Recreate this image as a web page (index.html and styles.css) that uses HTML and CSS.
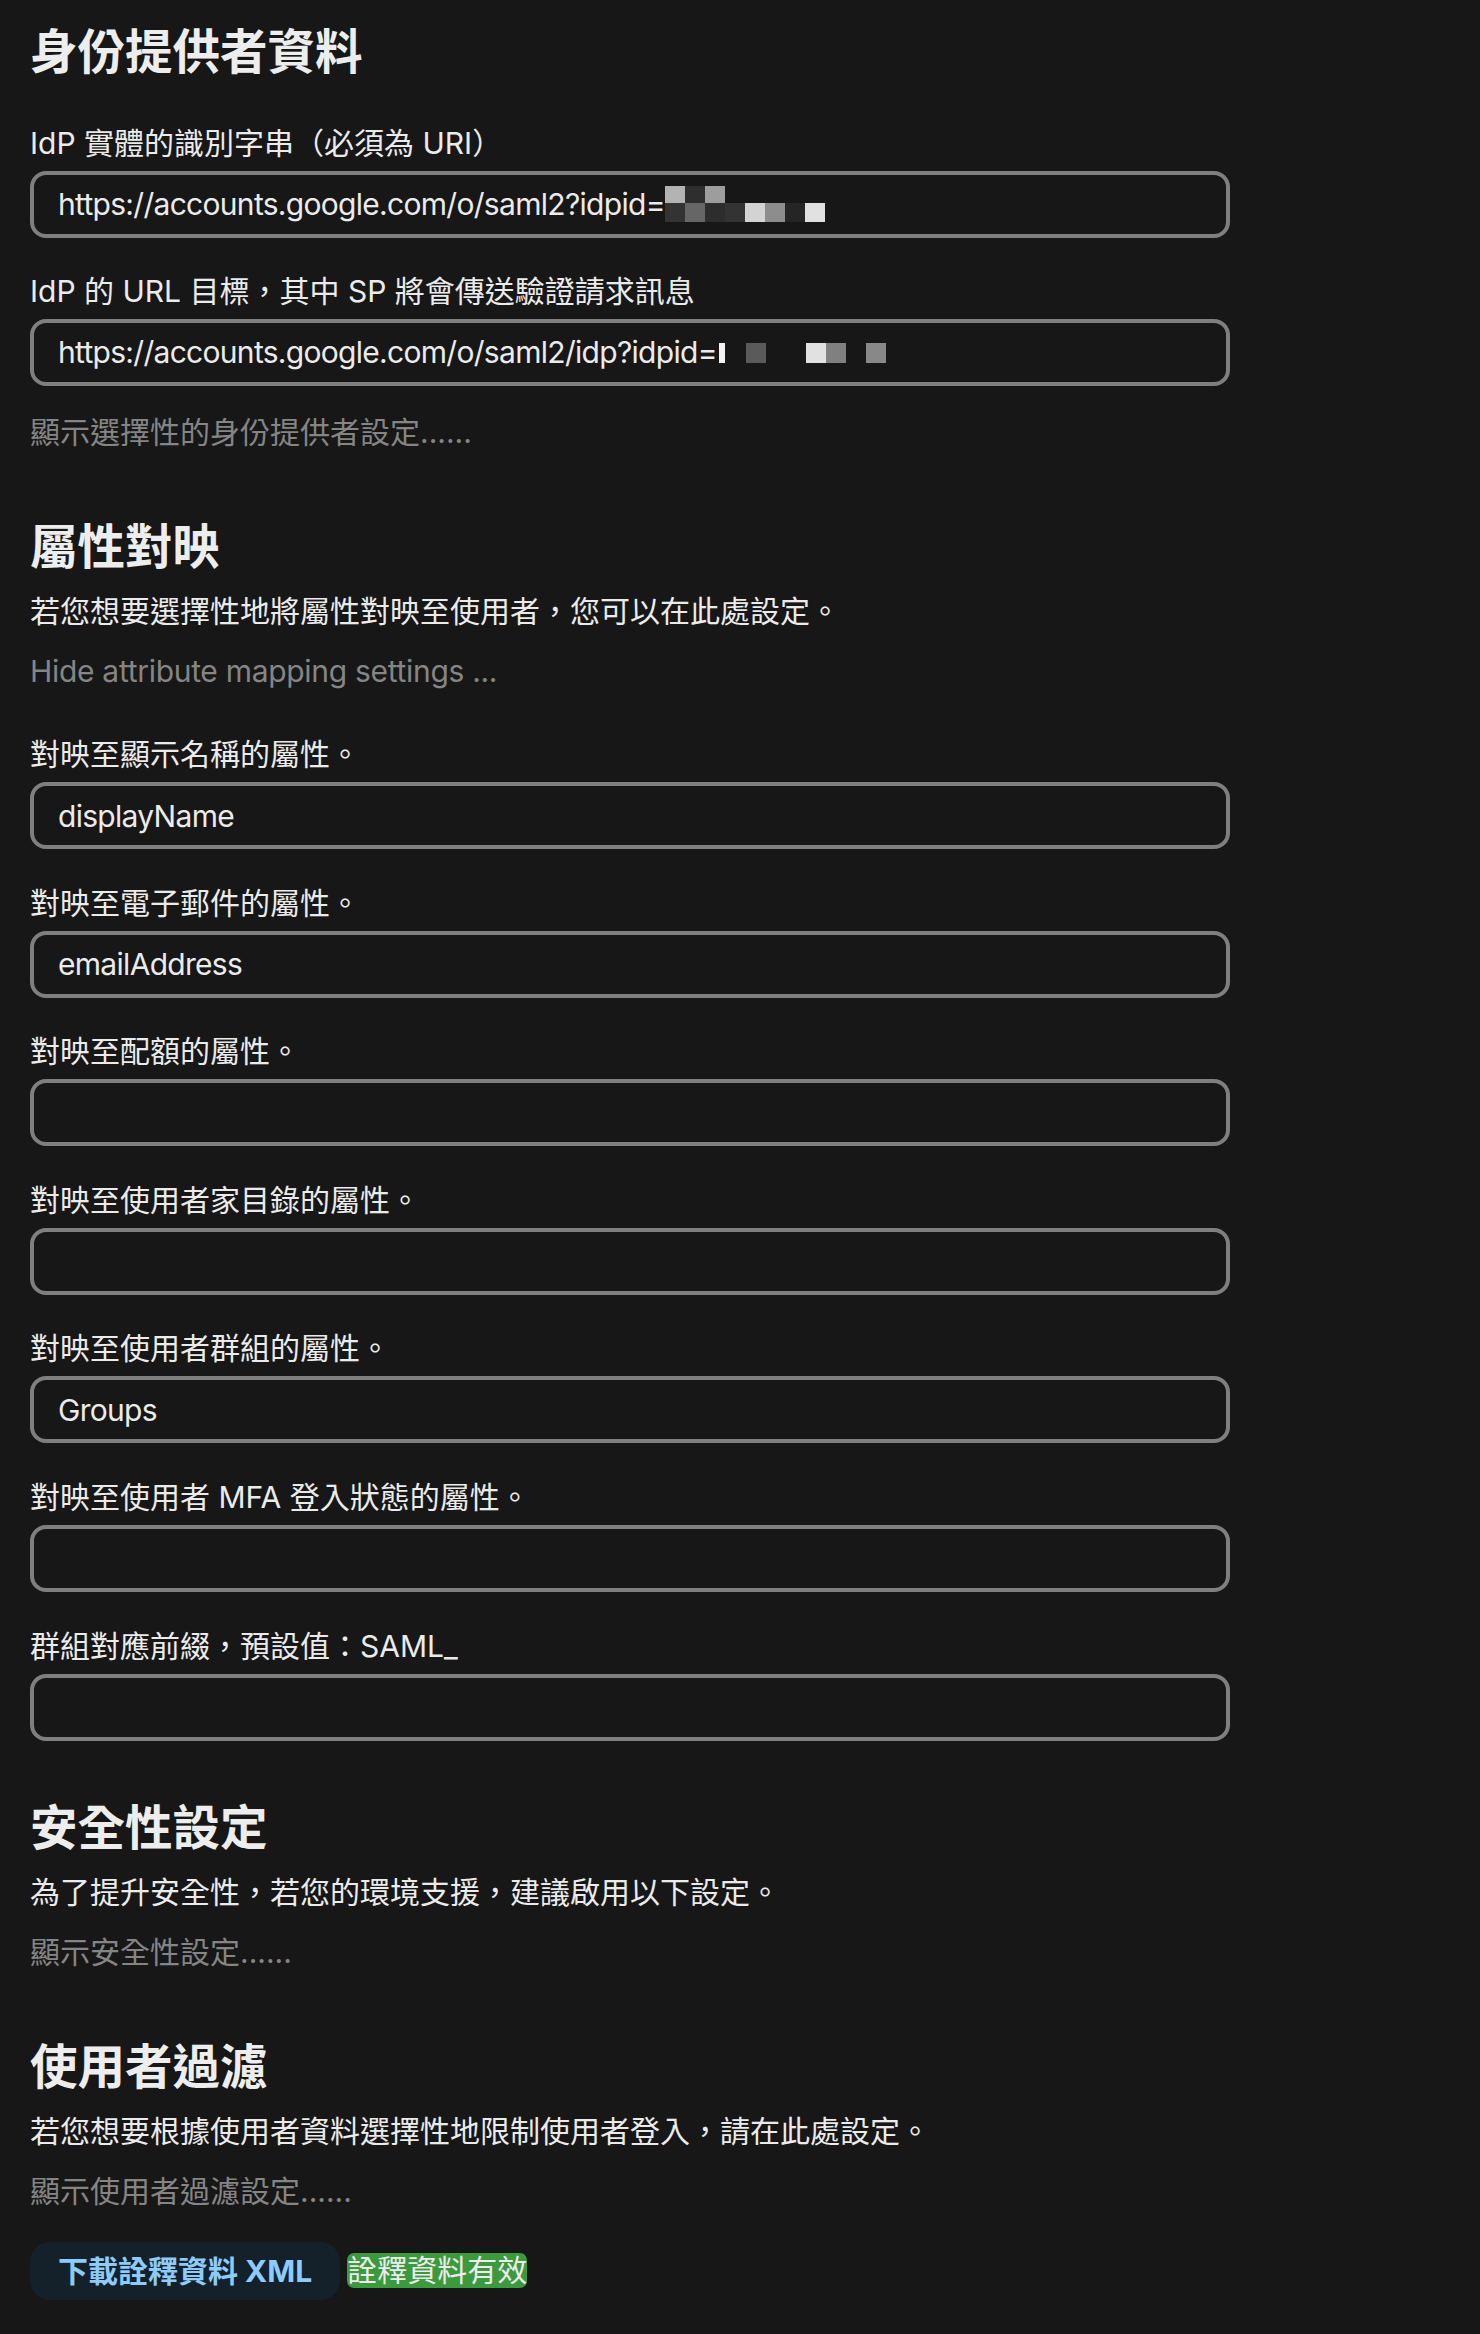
FILE: index.html
```html
<!DOCTYPE html>
<html lang="zh-Hant">
<head>
<meta charset="utf-8">
<title>SAML 設定</title>
<link rel="stylesheet" href="styles.css">
</head>
<body>
<main class="page">

  <section class="sec sec-first">
    <h2 class="sec-title">身份提供者資料</h2>
    <div class="field field-first">
      <label class="field-label">IdP 實體的識別字串（必須為 URI）</label>
      <div class="input input-masked"><span class="val">https://accounts.google.com/o/saml2?idpid=</span><span class="mosaic mosaic-a"><span class="grid-a"><i class="m b3"></i><i class="m m2e"></i><i class="m m9d"></i><i class="m"></i><i class="m"></i><i class="m"></i><i class="m"></i><i class="m"></i><i class="m m33"></i><i class="m m66"></i><i class="m m2d"></i><i class="m m33"></i><i class="m md3"></i><i class="m m8d"></i><i class="m m25"></i><i class="m me1"></i></span></span></div>
    </div>
    <div class="field">
      <label class="field-label">IdP 的 URL 目標，其中 SP 將會傳送驗證請求訊息</label>
      <div class="input input-masked"><span class="val">https://accounts.google.com/o/saml2/idp?idpid=</span><span class="mosaic mosaic-b"><span class="row-b"><i class="bar"></i><i class="n sp20"></i><i class="n m5a"></i><i class="n sp40"></i><i class="n me1"></i><i class="n m80"></i><i class="n sp20"></i><i class="n m88"></i></span></span></div>
    </div>
    <a class="toggle toggle-after-field">顯示選擇性的身份提供者設定......</a>
  </section>

  <section class="sec">
    <h2 class="sec-title">屬性對映</h2>
    <p class="desc">若您想要選擇性地將屬性對映至使用者，您可以在此處設定。</p>
    <a class="toggle toggle-en">Hide attribute mapping settings ...</a>
    <div class="fields">
      <div class="field field-first">
        <label class="field-label">對映至顯示名稱的屬性。</label>
        <input class="input" type="text" value="displayName">
      </div>
      <div class="field">
        <label class="field-label">對映至電子郵件的屬性。</label>
        <input class="input" type="text" value="emailAddress">
      </div>
      <div class="field">
        <label class="field-label">對映至配額的屬性。</label>
        <input class="input" type="text" value="">
      </div>
      <div class="field">
        <label class="field-label">對映至使用者家目錄的屬性。</label>
        <input class="input" type="text" value="">
      </div>
      <div class="field">
        <label class="field-label">對映至使用者群組的屬性。</label>
        <input class="input" type="text" value="Groups">
      </div>
      <div class="field">
        <label class="field-label">對映至使用者 MFA 登入狀態的屬性。</label>
        <input class="input" type="text" value="">
      </div>
      <div class="field">
        <label class="field-label">群組對應前綴，預設值：SAML_</label>
        <input class="input" type="text" value="">
      </div>
    </div>
  </section>

  <section class="sec sec-after-fields">
    <h2 class="sec-title">安全性設定</h2>
    <p class="desc">為了提升安全性，若您的環境支援，建議啟用以下設定。</p>
    <a class="toggle">顯示安全性設定......</a>
  </section>

  <section class="sec">
    <h2 class="sec-title">使用者過濾</h2>
    <p class="desc">若您想要根據使用者資料選擇性地限制使用者登入，請在此處設定。</p>
    <a class="toggle">顯示使用者過濾設定......</a>
  </section>

  <div class="actions">
    <button class="btn-download" type="button">下載詮釋資料 XML</button>
    <span class="badge-valid">詮釋資料有效</span>
  </div>

</main>
</body>
</html>
```

FILE: styles.css
```css
* {
  box-sizing: border-box;
}

html,
body {
  margin: 0;
  background: #171717;
}

body {
  font-family: Inter, "Noto Sans CJK TC", sans-serif;
  font-size: 30px;
  line-height: 40px;
  color: #ebebeb;
}

.page {
  width: 1260px;
  padding: 22px 30px 40px;
}

.sec {
  display: flex;
  flex-direction: column;
  align-items: flex-start;
  margin-top: 65px;
}

.sec-first {
  margin-top: 0;
}

.sec-after-fields {
  margin-top: 57px;
}

.sec-title {
  margin: 0;
  font-size: 47.5px;
  line-height: 60px;
  font-weight: 700;
  color: #ededed;
}

.desc {
  margin: 14px 0 0;
}

.toggle {
  display: block;
  margin-top: 20px;
  color: #858585;
  text-decoration: none;
  cursor: pointer;
}

.toggle-en {
  letter-spacing: -0.3px;
}

.toggle-after-field {
  margin-top: 26px;
}

.fields {
  width: 1200px;
  margin-top: 43px;
}

.sec-first .field-first {
  margin-top: 40.5px;
}

.field {
  width: 1200px;
  margin-top: 33.6px;
}

.fields .field-first {
  margin-top: 0;
}

.field-label {
  display: block;
  margin-bottom: 8px;
}

.input {
  display: block;
  width: 1200px;
  height: 67px;
  margin: 0;
  padding: 0 24px;
  border: 4px solid #7f7f7f;
  border-radius: 16px;
  background: #171717;
  color: #ebebeb;
  font-family: Inter, "Noto Sans CJK TC", sans-serif;
  font-size: 30px;
  letter-spacing: -0.7px;
  line-height: 59px;
  outline: none;
  white-space: nowrap;
  overflow: hidden;
}

.mosaic {
  display: inline-block;
  overflow: hidden;
}

.mosaic-a {
  width: 160px;
  height: 36px;
  vertical-align: -7px;
}

.grid-a {
  display: grid;
  grid-template-columns: repeat(8, 20px);
  grid-template-rows: 17px 19px;
}

.mosaic-b {
  width: 172px;
  height: 20px;
  vertical-align: 0;
}

.row-b {
  display: flex;
  height: 20px;
}

.m,
.n {
  display: block;
}

.n {
  width: 20px;
  height: 20px;
}

.bar {
  display: block;
  width: 6px;
  height: 20px;
  margin-left: 2.5px;
  background: #f2f2f2;
}

.sp20 {
  width: 20.5px;
}

.sp40 {
  width: 40px;
}

.b3 { background: #b3b3b3; }
.m2e { background: #2e2e2e; }
.m9d { background: #9d9d9d; }
.m33 { background: #333333; }
.m66 { background: #666666; }
.m2d { background: #2d2d2d; }
.md3 { background: #d3d3d3; }
.m8d { background: #8d8d8d; }
.m25 { background: #252525; }
.me1 { background: #e1e1e1; }
.m5a { background: #5a5a5a; }
.m80 { background: #808080; }
.m88 { background: #888888; }

.actions {
  display: flex;
  align-items: center;
  gap: 7px;
  margin-top: 31px;
}

.btn-download {
  height: 58px;
  padding: 0 28px;
  border: none;
  border-radius: 20px;
  background: #14212b;
  color: #8ccbfb;
  font-family: Inter, "Noto Sans CJK TC", sans-serif;
  font-size: 30px;
  font-weight: 700;
  line-height: 58px;
  cursor: pointer;
}

.badge-valid {
  display: inline-block;
  height: 35px;
  line-height: 35px;
  border-radius: 7px;
  background: #3b993e;
  color: #ececec;
  white-space: nowrap;
}
```
